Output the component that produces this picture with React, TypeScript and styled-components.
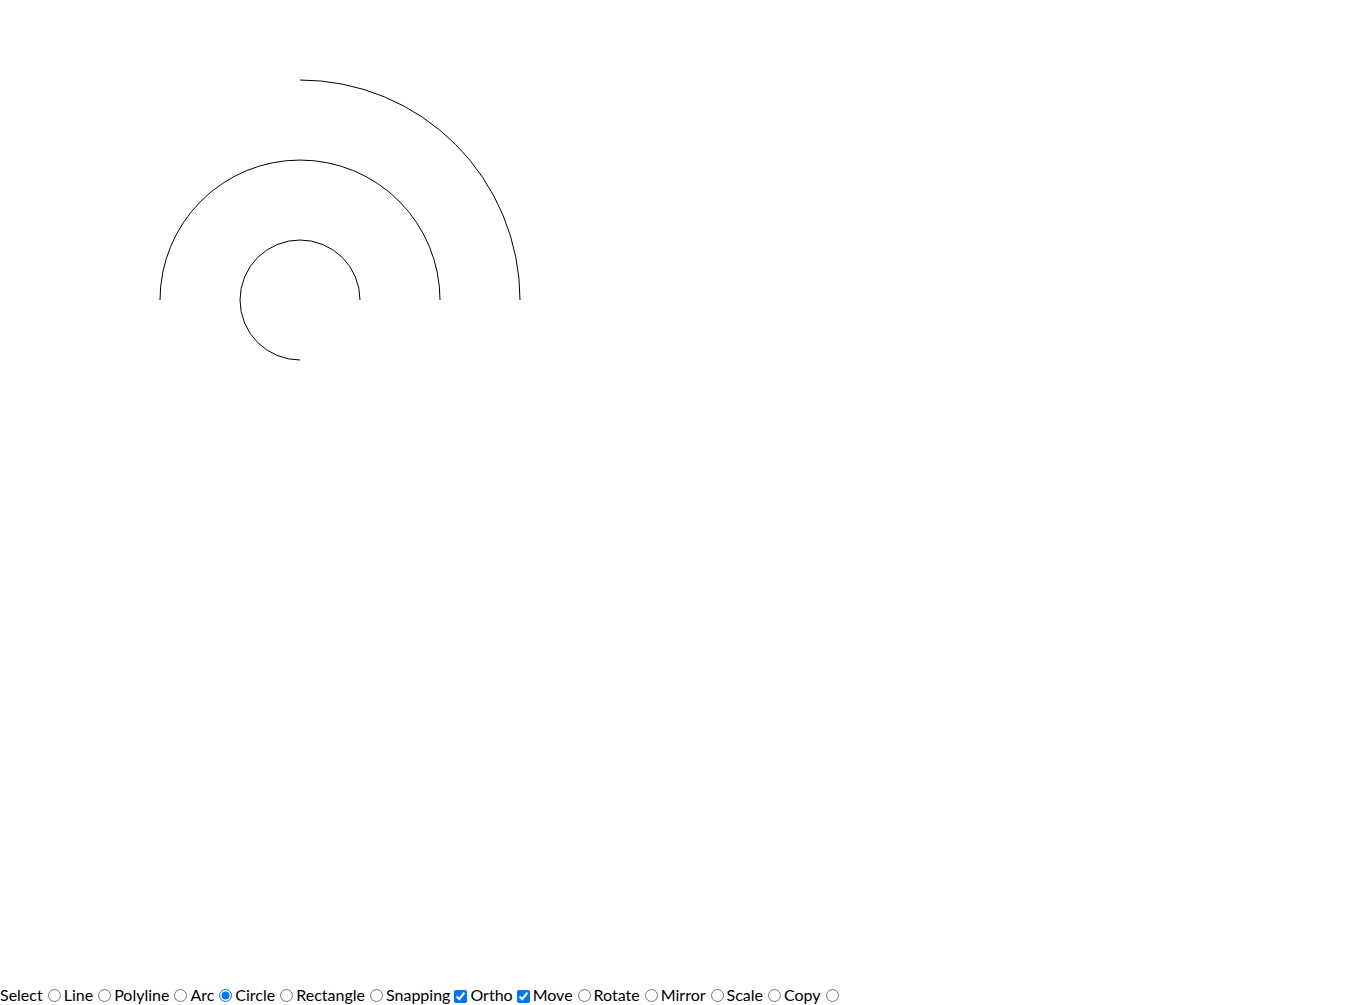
import React from "react";
import styled, { createGlobalStyle } from "styled-components";

const GlobalStyle = createGlobalStyle`
    html, body {
        margin: 0;
        padding: 0;
        background: #ffffff;
    }
`;

const tools = ["Line", "Polyline", "Arc", "Circle", "Rectangle"];
const edits = ["Rotate", "Mirror", "Scale", "Copy"];

// arcs drawn around a shared centre point
const CX = 300;
const CY = 300;

const arcPath = (r: number, from: number, to: number): string => {
    const a0 = (from * Math.PI) / 180;
    const a1 = (to * Math.PI) / 180;
    const x0 = CX + r * Math.cos(a0);
    const y0 = CY + r * Math.sin(a0);
    const x1 = CX + r * Math.cos(a1);
    const y1 = CY + r * Math.sin(a1);
    const large = Math.abs(to - from) > 180 ? 1 : 0;
    return `M ${x0} ${y0} A ${r} ${r} 0 ${large} 1 ${x1} ${y1}`;
};

const App: React.FC = () => {
    return (
        <Page>
            <GlobalStyle />
            <Canvas width={1366} height={984}>
                <path d={arcPath(60, 90, 360)} />
                <path d={arcPath(140, 180, 360)} />
                <path d={arcPath(220, 270, 360)} />
            </Canvas>
            <Toolbar>
                Select
                <Radio type="radio" name="tool" />
                {tools.map((t) => (
                    <React.Fragment key={t}>
                        {t}
                        <Radio
                            type="radio"
                            name="tool"
                            defaultChecked={t === "Arc"}
                        />
                    </React.Fragment>
                ))}
                Snapping
                <Check type="checkbox" defaultChecked />
                Ortho
                <Check type="checkbox" defaultChecked />
                Move
                <Radio type="radio" name="edit" />
                {edits.map((t) => (
                    <React.Fragment key={t}>
                        {t}
                        <Radio type="radio" name="edit" />
                    </React.Fragment>
                ))}
            </Toolbar>
        </Page>
    );
};

const Page = styled.div`
    width: 1366px;
    height: 1005px;
    overflow: hidden;
`;

const Canvas = styled.svg`
    display: block;
    fill: none;
    stroke: #000000;
    stroke-width: 1;
`;

const Toolbar = styled.div`
    font-family: "Lato", "Open Sans", sans-serif;
    font-size: 16px;
    line-height: 21px;
    color: #000000;
    white-space: nowrap;
`;

const Radio = styled.input`
    margin: 3px 3px 0 5px;
    width: 13px;
    height: 13px;
    vertical-align: -1px;
`;

const Check = styled.input`
    margin: 3px 3px 3px 4px;
    width: 13px;
    height: 13px;
    vertical-align: -2px;
`;

export default App;
